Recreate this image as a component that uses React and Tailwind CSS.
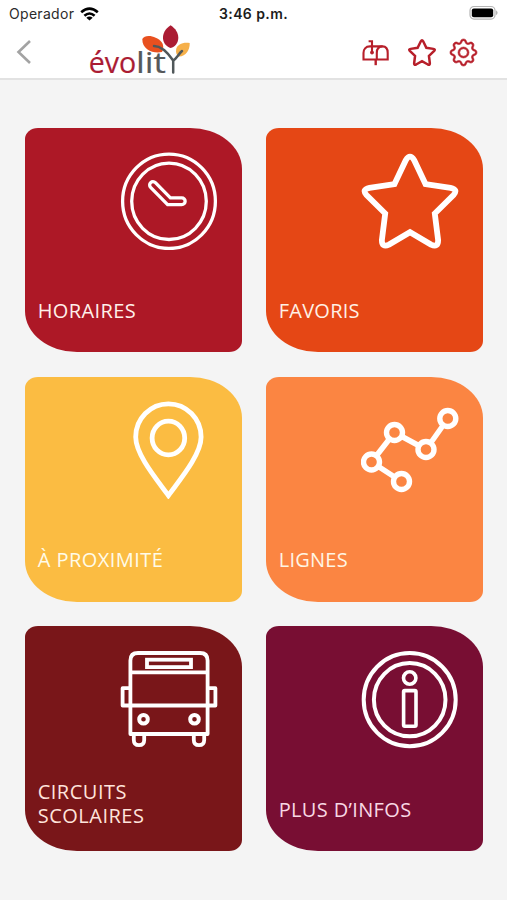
import React from "react";
import { BsGear } from "react-icons/bs";

const STAR =
  "M33.5 32 L44.8 8.2 Q49 1 53.2 8.2 L64.5 32 L89.5 35.8 Q97.5 37.5 92.5 43 L73.8 61.5 L77.1 88 Q77.3 95.8 70 92.6 L49 80.2 L28 92.6 Q20.7 95.8 20.9 88 L24.2 61.5 L5.5 43 Q0.5 37.5 8.5 35.8 Z";

function Glyph({ children, sw = 3.4 }) {
  return (
    <svg
      className="block h-[98px] w-[98px]"
      viewBox="0 0 98 98"
      fill="none"
      stroke="#fff"
      strokeWidth={sw}
      strokeLinejoin="round"
    >
      {children}
    </svg>
  );
}

const Clock = () => (
  <Glyph sw={3.3}>
    <ellipse cx="49" cy="49.3" rx="46.4" ry="47.2" />
    <ellipse cx="49" cy="49.3" rx="37.3" ry="38.2" />
    <path d="M33 33 L49 49.3 H61.8" strokeWidth="10" strokeLinecap="round" strokeLinejoin="miter" />
    <path d="M33 33 L49 49.3 H61.8" stroke="#ad1826" strokeWidth="3.4" strokeLinecap="round" />
  </Glyph>
);

const Star = () => (
  <Glyph sw={5.8}>
    <path d={STAR} strokeLinejoin="miter" />
  </Glyph>
);

const Pin = () => (
  <Glyph sw={4.8}>
    <path d="M48.4 94.5 C38 80 15.7 54 15.7 36 A32.7 33.2 0 0 1 81.1 36 C81.1 54 58.8 80 48.4 94.5 Z" strokeLinejoin="miter" />
    <ellipse cx="48.4" cy="37" rx="16.3" ry="16.9" />
  </Glyph>
);

const Lines = () => (
  <Glyph sw={5.4}>
    <path d="M40.5 80.5 L10.5 61 L33.5 31.5 L65 48.5 L87 17.5" />
    <g fill="#fb8542" strokeWidth="5.4">
      <circle cx="40.5" cy="80.5" r="8" />
      <circle cx="10.5" cy="61" r="8" />
      <circle cx="33.5" cy="31.5" r="8" />
      <circle cx="65" cy="48.5" r="8" />
      <circle cx="86.8" cy="17.5" r="8" />
    </g>
  </Glyph>
);

const Bus = () => (
  <Glyph sw={3.8}>
    <path d="M10.4 83 V9.5 Q10.4 2 18 2 H80 Q87.6 2 87.6 9.5 V83 Z" />
    <rect x="27" y="8.7" width="44" height="7.4" strokeLinejoin="miter" />
    <path d="M10.4 21.3 H87.6 M10.4 54.5 H87.6" />
    <path d="M10.4 37.2 H2.6 V54.5 H10.4 M87.6 37.2 H95.4 V54.5 H87.6" />
    <circle cx="23.5" cy="68.2" r="4.3" strokeWidth="4" />
    <circle cx="74.5" cy="68.2" r="4.3" strokeWidth="4" />
    <path d="M13.8 83 V89 Q13.8 94.2 19 94.2 Q24.2 94.2 24.2 89 V83 M73.8 83 V89 Q73.8 94.2 79 94.2 Q84.2 94.2 84.2 89 V83" />
  </Glyph>
);

const Info = () => (
  <Glyph sw={4}>
    <ellipse cx="48.7" cy="48.7" rx="46" ry="46.6" />
    <ellipse cx="48.7" cy="48.7" rx="35.8" ry="36.6" />
    <circle cx="48.7" cy="27" r="6.2" strokeWidth="3.6" />
    <rect x="42.6" y="39.6" width="12.4" height="35.6" rx="1.2" strokeWidth="3.6" />
  </Glyph>
);

const tiles = [
  { label: "HORAIRES", color: "bg-[#ad1826]", text: "text-[#fff0ea] tracking-[0.4px] pb-[29px]", icon: Clock },
  { label: "FAVORIS", color: "bg-[#e54715]", text: "text-[#fff0e4] tracking-[0.25px] pb-[29px]", icon: Star },
  { label: "À PROXIMITÉ", color: "bg-[#fbbc42]", text: "text-[#fffbe8] tracking-[0.45px] pb-[29.6px]", icon: Pin },
  { label: "LIGNES", color: "bg-[#fb8542]", text: "text-[#fff5e4] tracking-[0.25px] pb-[29.6px]", icon: Lines },
  { label: "CIRCUITS SCOLAIRES", color: "bg-[#791619]", text: "text-[#ffe4dc] tracking-[0.5px] pb-[23.5px]", icon: Bus },
  { label: "PLUS D’INFOS", color: "bg-[#780e33]", text: "text-[#f8d8e4] tracking-[0.35px] pb-[29px]", icon: Info },
];

function Tile({ label, color, text, icon: Icon }) {
  return (
    <button
      className={`flex h-[224.7px] flex-col justify-between rounded-[13px_52px_13px_52px/11px_41px_11px_41px] pt-[24.3px] pr-[24px] pl-[12.4px] text-left ${color}`}
    >
      <span className="self-end">
        <Icon />
      </span>
      <span className={`w-[150px] text-[20px] leading-[24px] ${text}`}>{label}</span>
    </button>
  );
}

function StatusBar() {
  return (
    <div className="grid h-[27px] grid-cols-3 items-center px-[9px] font-['Inter','Liberation_Sans',sans-serif] text-[14px] leading-[27px]">
      <div className="flex items-center gap-[6px] text-[#2b2b2b]">
        <span className="tracking-[0.3px]">Operador</span>
        <svg className="h-[14px] w-[19px]" viewBox="0 0 19 14" fill="none" stroke="#000" strokeWidth="2.6">
          <path d="M1.2 5.3 Q9.5 -2.2 17.8 5.3" />
          <path d="M4.4 8.8 Q9.5 4.2 14.6 8.8" />
          <path d="M9.5 13.6 L6.3 10.8 Q9.5 8.4 12.7 10.8 Z" fill="#000" stroke="none" />
        </svg>
      </div>
      <span className="text-center font-semibold tracking-[0.4px] text-[#1c1c1c]">3:46 p.m.</span>
      <svg className="-mt-px h-[16px] w-[31px] justify-self-end" viewBox="0 0 31 16">
        <rect x="3" y="1.5" width="25" height="12.6" rx="4" fill="#fff" stroke="#b5b5b5" strokeWidth="1.2" />
        <rect x="4.8" y="3.4" width="21.4" height="8.8" rx="2" fill="#000" />
        <path d="M29.2 5.3 Q31.8 7.8 29.2 10.3 Z" fill="#a5a5a5" />
      </svg>
    </div>
  );
}

function Logo() {
  return (
    <svg className="h-[60px] w-[104px] overflow-visible" viewBox="88 24 104 60">
      <g fontFamily="'Open Sans','Noto Sans',sans-serif" fontSize="28.5" strokeWidth="0.2">
        <text x="88.8" y="73.2" fill="#ab1c33" stroke="#ab1c33" textLength="47.5" lengthAdjust="spacingAndGlyphs">évo</text>
        <text x="136" y="73.2" fill="#55585a" stroke="#55585a" textLength="30" lengthAdjust="spacingAndGlyphs">lit</text>
      </g>
      <path d="M142.3 39 C145 33.5 157 36 161.5 42 C164 45.5 163.5 49 162 52 C154 54 142 50 142.3 39 Z" fill="#e8501f" />
      <path d="M170.6 25.3 C165 29 162.7 34 163 38.5 C163.4 43.5 167 47 170.6 48 C175 47 178.3 43 178.3 38 C178.3 33 175.5 28.5 170.6 25.3 Z" fill="#ab1c33" />
      <path d="M189.7 43 C183 41.8 177 44.5 176.2 49 C175.6 52.5 176.5 55 178.5 56.5 C185.5 57 190 50 189.7 43 Z" fill="#f6b04a" />
      <g fill="none" stroke="#50585a" strokeWidth="2.5" strokeLinecap="round">
        <path d="M154 46 C162 46 168 53 173.2 60.5 V72.5" />
        <path d="M173.2 60.5 C177 58 178.5 54 182 51" />
      </g>
    </svg>
  );
}

function Mailbox() {
  return (
    <svg className="h-[27px] w-[27px]" viewBox="0 0 27 27" fill="none" stroke="#b71f2a" strokeWidth="2.1">
      <path d="M8 7.4 C3.5 7.4 1.5 10.5 1.5 14 V20.5 H25.7 V14 C25.7 10 24 7.4 20.5 7.4 H8" />
      <path d="M14.8 20.5 V14 C14.8 10 17 7.4 20.5 7.4" />
      <path d="M13.7 20.5 V26.2" strokeWidth="2.4" />
      <path d="M6.6 2.2 H10 V14" />
      <circle cx="10" cy="13.5" r="1.5" fill="#b71f2a" strokeWidth="1" />
    </svg>
  );
}

function Header() {
  return (
    <header className="flex h-[53px] items-start justify-between border-b-2 border-[#e2e2e2] pr-[30px] pl-[15px]">
      <div className="flex items-start">
        <svg className="mt-[12px] h-[26px] w-[18px]" viewBox="0 0 18 26" fill="none" stroke="#a3a3a3" strokeWidth="2.6">
          <path d="M15 2 L3.5 13 L15 24" />
        </svg>
        <div className="-mt-[3px] ml-[55px]">
          <Logo />
        </div>
      </div>
      <div className="mt-[12px] flex items-center text-[#b71f2a]">
        <Mailbox />
        <svg className="ml-[19px] h-[27px] w-[28px]" viewBox="-1 0 100 98" preserveAspectRatio="none" fill="none" stroke="currentColor" strokeWidth="9">
          <path d={STAR} />
        </svg>
        <BsGear className="ml-[14px] h-[27px] w-[27px] overflow-visible" strokeWidth={0.35} />
      </div>
    </header>
  );
}

export default function App() {
  return (
    <div className="h-[900px] w-[507px] overflow-hidden bg-[#f4f4f4] font-['Open_Sans','Noto_Sans',sans-serif]">
      <div className="bg-white">
        <StatusBar />
        <Header />
      </div>
      <main className="grid grid-cols-[216.5px_216.5px] gap-x-[24.5px] gap-y-[24.7px] pt-[47.6px] pl-[25.3px]">
        {tiles.map((t) => (
          <Tile key={t.label} {...t} />
        ))}
      </main>
    </div>
  );
}
